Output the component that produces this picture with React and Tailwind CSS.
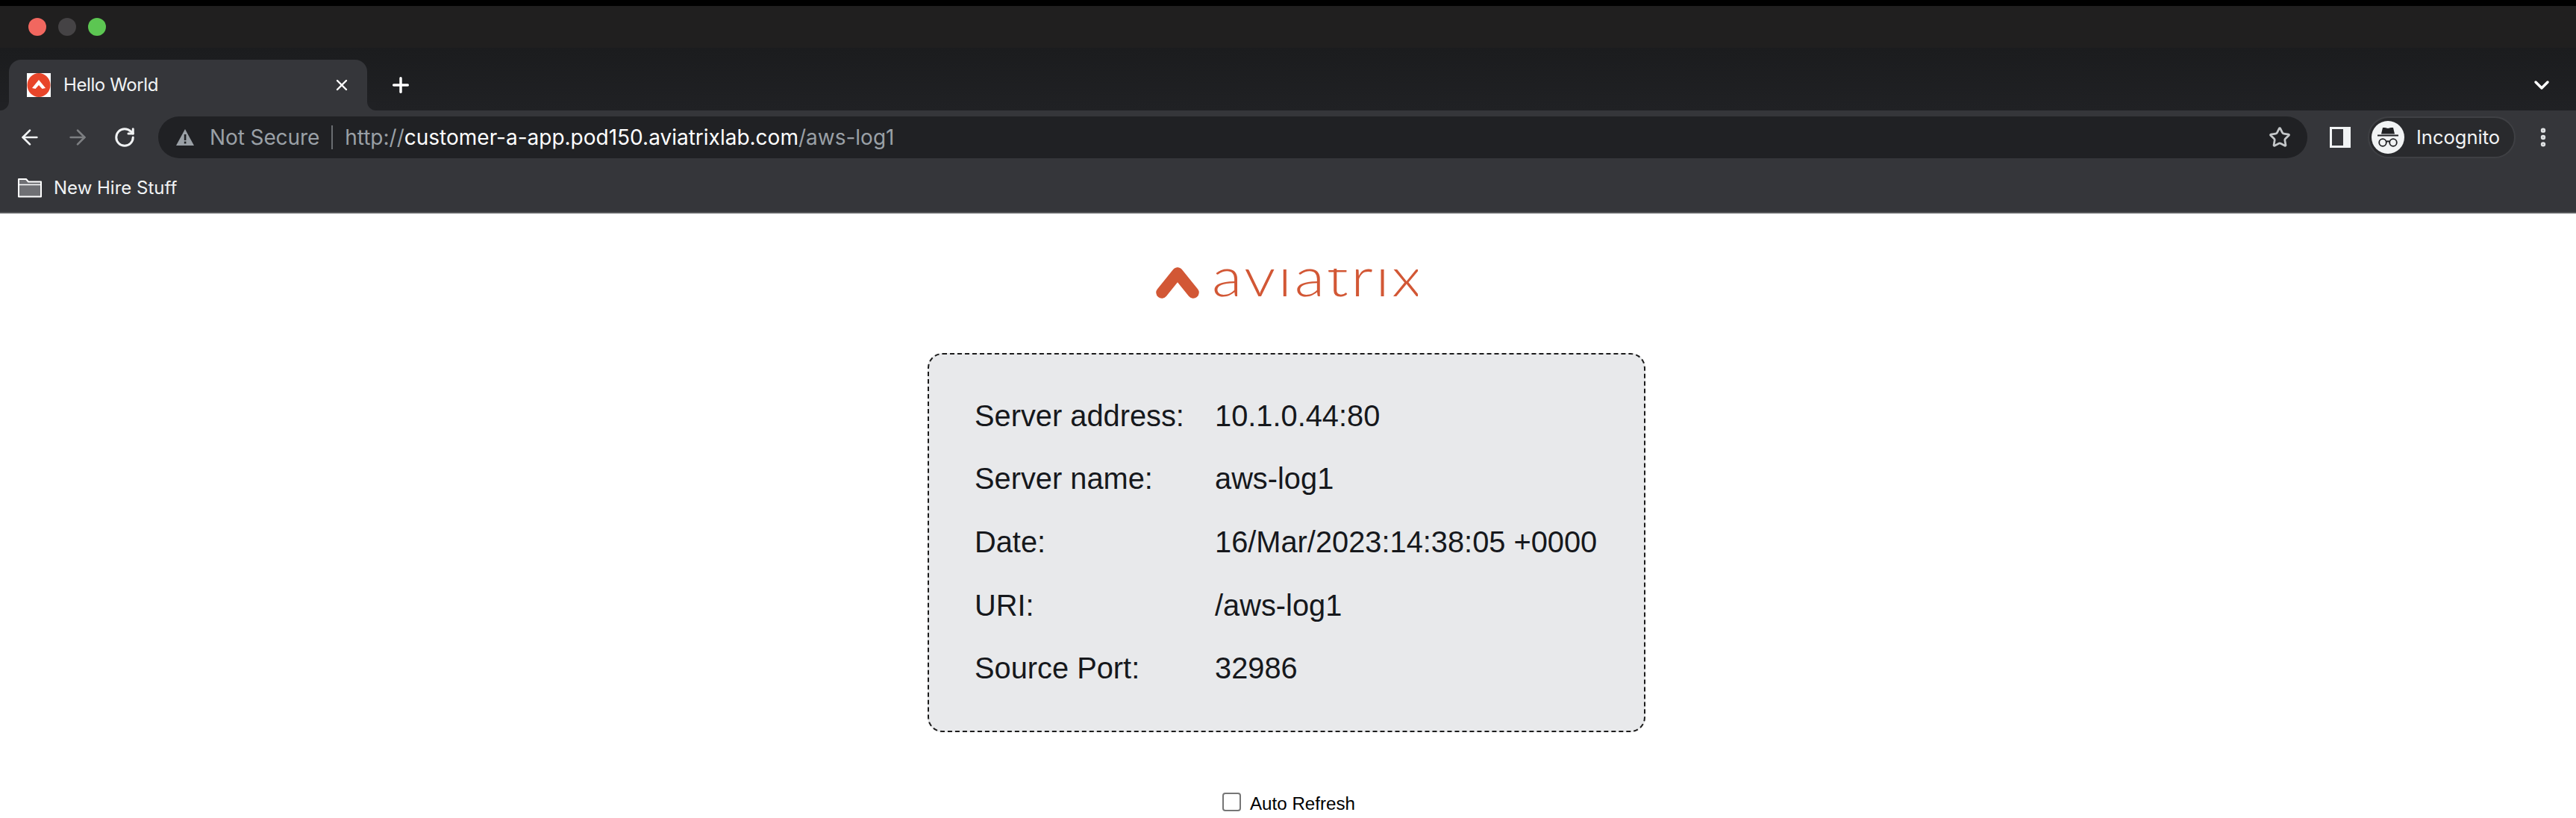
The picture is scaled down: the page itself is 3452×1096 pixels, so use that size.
import React from 'react';
import { X, Plus, ChevronDown, Star, EllipsisVertical, ArrowLeft, ArrowRight, RotateCw } from 'lucide-react';

const Favicon = () => (
    <svg width="32" height="32" viewBox="0 0 32 32" className="shrink-0">
        <rect width="32" height="32" fill="#ffffff" />
        <ellipse cx="16" cy="16" rx="15.5" ry="16" fill="#e8452a" />
        <path d="M7 20 L16 9 L25 20 L20.5 21 L16 16 L11.5 21 Z" fill="#ffffff" />
    </svg>
);

const LogoMark = () => (
    <svg width="58" height="42" viewBox="0 0 58 42" className="shrink-0">
        <path d="M29 8 L8 34 M29 8 L50 34" stroke="#d25735" strokeWidth="15.5" strokeLinecap="round" fill="none" />
    </svg>
);

const Warning = () => (
    <svg width="24" height="22" viewBox="0 0 24 22" className="shrink-0">
        <path d="M12 0 L24 22 H0 Z" fill="#9aa0a6" />
        <rect x="10.8" y="7" width="2.6" height="8" fill="#202124" />
        <rect x="10.8" y="16.6" width="2.6" height="2.8" fill="#202124" />
    </svg>
);

const Folder = () => (
    <svg width="32" height="26" viewBox="0 0 32 26" className="shrink-0">
        <path d="M1 24.5 V1 H11 L14 4.5 H31 V24.5 Z" fill="#6f7074" stroke="#ffffff" strokeWidth="2" strokeLinejoin="round" />
        <path d="M1 8.5 H31" stroke="#ffffff" strokeWidth="1.5" />
    </svg>
);

const IncognitoAvatar = () => (
    <svg width="44" height="44" viewBox="0 0 44 44" className="shrink-0">
        <circle cx="22" cy="22" r="22" fill="#f1f3f4" />
        <path d="M13 17.5 L15 9 H18 L22 10 L26 9 H29 L31 17.5 Z" fill="#202124" />
        <rect x="8" y="18.5" width="28" height="2" fill="#202124" />
        <circle cx="15" cy="29" r="4.8" fill="none" stroke="#202124" strokeWidth="1.8" />
        <circle cx="29" cy="29" r="4.8" fill="none" stroke="#202124" strokeWidth="1.8" />
        <path d="M19.5 28 Q22 26.5 24.5 28" fill="none" stroke="#202124" strokeWidth="1.8" />
    </svg>
);

const rows = [
    ['Server address:', '10.1.0.44:80'],
    ['Server name:', 'aws-log1'],
    ['Date:', '16/Mar/2023:14:38:05 +0000'],
    ['URI:', '/aws-log1'],
    ['Source Port:', '32986'],
];

const App = () => {
    return (
        <div className="w-[3452px] h-[1096px] overflow-hidden bg-white font-['Liberation_Sans',sans-serif]">
            {/* Browser chrome */}
            <div className="font-['Inter',sans-serif]">
                <div className="h-[8px] bg-black" />
                <div className="h-[56px] bg-[#201f1f] flex items-center gap-[16px] pl-[38px]">
                    <span className="w-[24px] h-[24px] rounded-full bg-[#f1675f]" />
                    <span className="w-[24px] h-[24px] rounded-full bg-[#454345]" />
                    <span className="w-[24px] h-[24px] rounded-full bg-[#5cc652]" />
                </div>

                {/* Tab strip */}
                <div className="h-[84px] bg-gradient-to-b from-[#1b1c1e] to-[#202124] flex items-end">
                    <div className="w-[12px] h-[12px] bg-[#35363a]">
                        <div className="w-full h-full bg-[#202124] rounded-br-[12px]" />
                    </div>
                    <div className="w-[480px] h-[68px] bg-[#35363a] rounded-t-[16px] flex items-center pl-[24px] pr-[22px]">
                        <Favicon />
                        <span className="ml-[17px] text-[24px] text-[#f1f3f4] tracking-[-0.4px]">Hello World</span>
                        <X size={24} strokeWidth={2.4} className="ml-auto text-white" />
                    </div>
                    <div className="w-[12px] h-[12px] bg-[#35363a]">
                        <div className="w-full h-full bg-[#202124] rounded-bl-[12px]" />
                    </div>
                    <div className="flex-1 h-[68px] flex items-center pl-[17px] pr-[30px]">
                        <Plus size={32} strokeWidth={2.6} className="text-white" />
                        <ChevronDown size={32} strokeWidth={2.6} className="ml-auto text-white" />
                    </div>
                </div>

                {/* Toolbar */}
                <div className="h-[72px] bg-[#35363a] flex items-center">
                    <div className="w-[212px] flex items-center pl-[24px] gap-[32px] shrink-0">
                        <ArrowLeft size={32} strokeWidth={2} className="text-[#f1f3f4]" />
                        <ArrowRight size={32} strokeWidth={2} className="text-[#7d7f82]" />
                        <RotateCw size={30} strokeWidth={2.4} className="text-[#f1f3f4]" />
                    </div>
                    <div className="w-[2880px] h-[56px] rounded-full bg-[#202124] flex items-center pl-[24px] pr-[22px] shrink-0">
                        <Warning />
                        <span className="ml-[21px] text-[28px] text-[#9aa0a6] tracking-[-0.1px]">Not Secure</span>
                        <span className="ml-[16px] w-[2px] h-[32px] bg-[#6a6d71]" />
                        <span className="ml-[16px] text-[28px] text-[#9aa0a6]">
                            http://<span className="text-white">customer-a-app.pod150.aviatrixlab.com</span>/aws-log1
                        </span>
                        <Star size={30} strokeWidth={2.2} className="ml-auto text-[#c4c7c9]" />
                    </div>
                    <div className="w-[28px] h-[28px] ml-[30px] bg-[#f1f3f4] flex justify-start items-center pl-[3px] shrink-0">
                        <div className="w-[15px] h-[22px] bg-[#35363a]" />
                    </div>
                    <div className="ml-[23px] w-[198px] h-[56px] rounded-full bg-[#292a2d] border-[2px] border-[#3f4044] flex items-center pl-[3px] shrink-0">
                        <IncognitoAvatar />
                        <span className="ml-[16px] text-[25.5px] text-[#f1f3f4]">Incognito</span>
                    </div>
                    <EllipsisVertical size={32} strokeWidth={2.8} className="ml-[21px] text-[#dfe1e3]" />
                </div>

                {/* Bookmarks bar */}
                <div className="h-[66px] bg-[#35363a] border-b-[2px] border-[#5a5b5e] flex items-center pl-[24px]">
                    <Folder />
                    <span className="ml-[16px] text-[24px] text-[#f1f3f4]">New Hire Stuff</span>
                </div>
            </div>

            {/* Page */}
            <div className="flex flex-col items-center pr-[4px]">
                <div className="mt-[72px] flex items-center gap-[17px] h-[42px]">
                    <LogoMark />
                    <span className="block w-[276px] h-[38px] overflow-hidden font-['Lato',sans-serif] font-light text-[72px] leading-[66px] tracking-[3px] text-[#d25735]">
                        <span className="block -mt-[24px] origin-left scale-x-[1.16]">aviatrix</span>
                    </span>
                </div>

                <div className="mt-[73px] w-[962px] h-[508px] rounded-[20px] border-[2px] border-dashed border-[#1c1c1c] bg-[#e8e9eb] pl-[61px] pt-[40px]">
                    <div className="grid grid-cols-[322px_1fr] auto-rows-[84.7px] items-center text-[39.8px] text-[#16181c]">
                        {rows.map(([label, value]) => (
                            <React.Fragment key={label}>
                                <span>{label}</span>
                                <span>{value}</span>
                            </React.Fragment>
                        ))}
                    </div>
                </div>

                <label className="mt-[78px] pl-[6px] flex items-center text-[24.2px] text-black">
                    <input type="checkbox" className="appearance-none w-[25px] h-[25px] rounded-[4px] border-[2px] border-[#767676] bg-white -mt-[6px]" />
                    <span className="ml-[12px]">Auto Refresh</span>
                </label>
            </div>
        </div>
    );
};

export default App;
